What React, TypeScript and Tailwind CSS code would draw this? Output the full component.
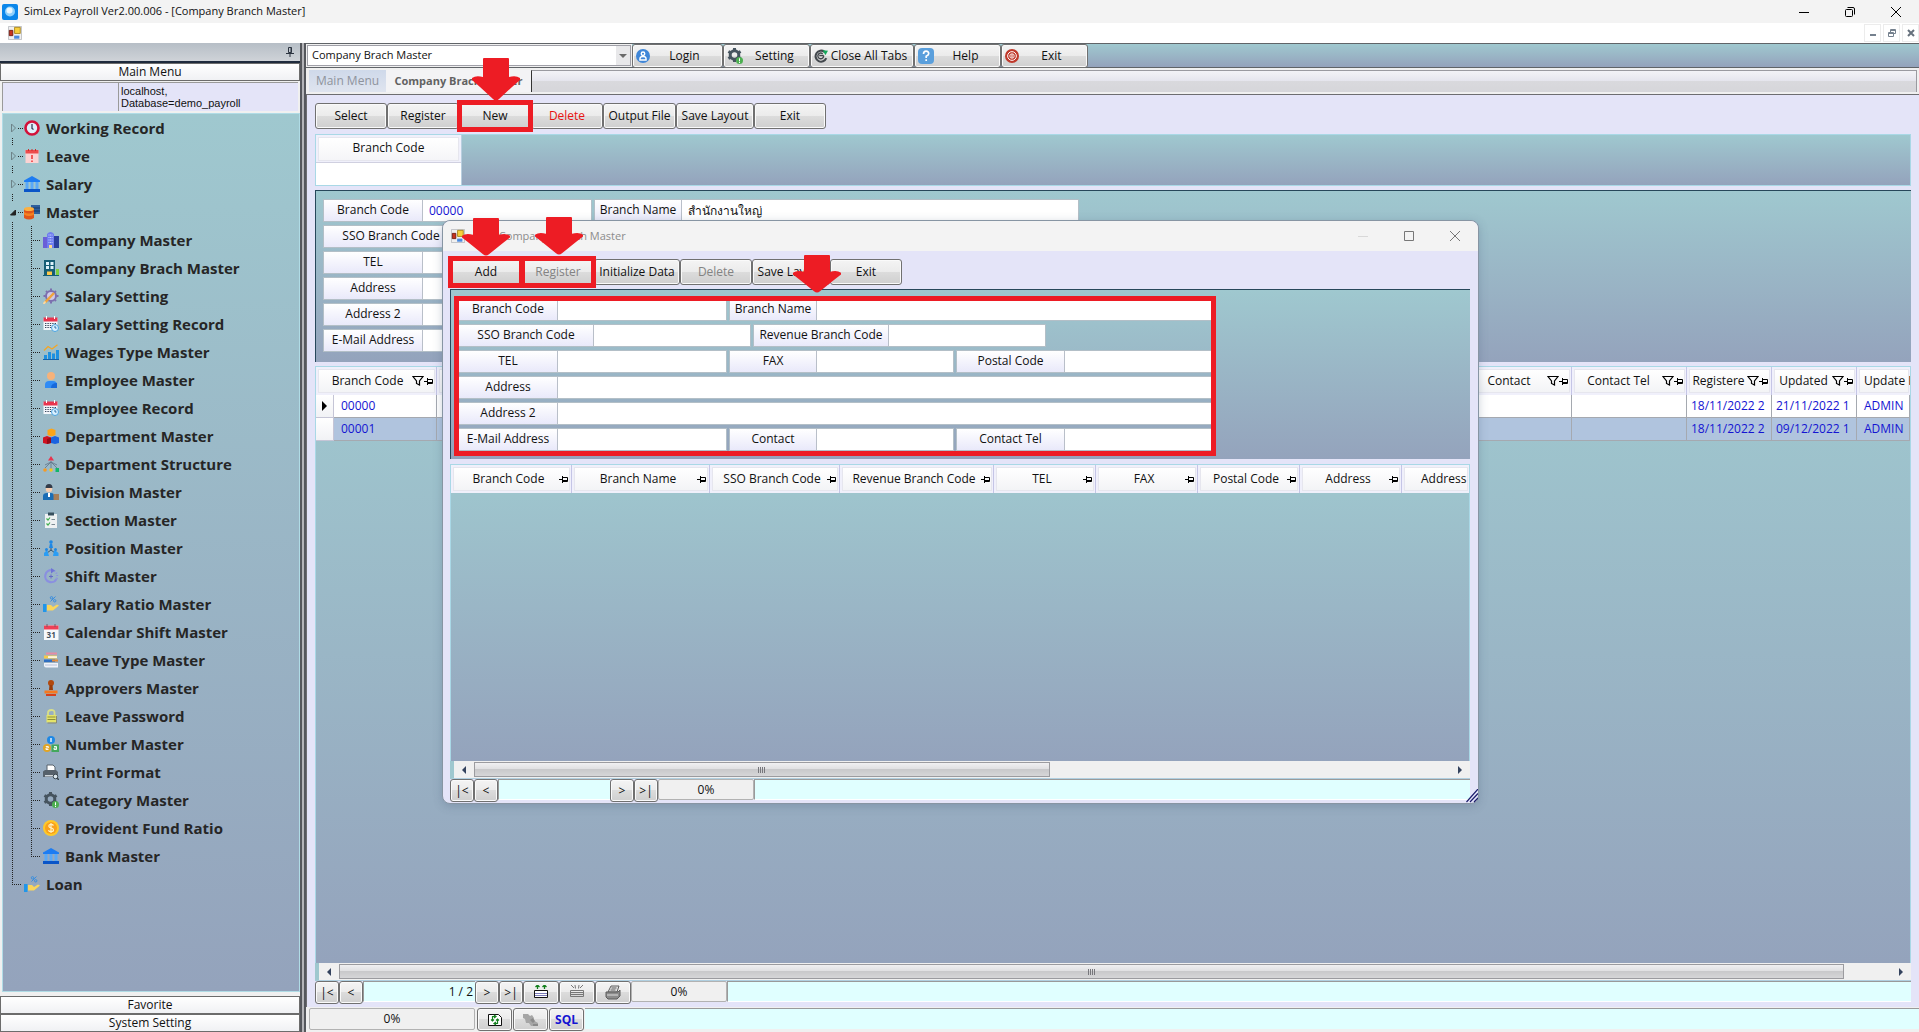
import React from 'react';
import { clsx } from 'clsx';

const BANK = (
  <>
    <path d="M8 0 L16 4.5 V6 H0 V4.5Z" fill="#1d7cf2" />
    <path d="M1.5 6h3v7h-3zM6.5 6h3v7h-3zM11.500 6h3v7h-3z" fill="#5aa9f8" />
    <path d="M0 13h16v3H0z" fill="#0a55c8" />
  </>
);

const CALENDAR_CLOCK = (
  <>
    <path d="M0.500 2h14v12h-14z" fill="#f4f6fb" />
    <path d="M0.500 1.500h14v4h-14z" fill="#e8344e" />
    <path d="M3.500 0v3M11.500 0v3" stroke="#fff" />
    <path d="M2 7.500h11M2 9.500h11M2 11.500h7" stroke="#3c4a60" strokeDasharray="1.400 1" />
    <circle cx="12" cy="12" r="3.500" fill="#d9f0ff" stroke="#4aa3df" />
    <path d="M12 10v2h1.500" stroke="#2a6fa8" fill="none" />
  </>
);

const HAND_PERCENT = (
  <>
    <path d="M0 8h3.500v8H0z" fill="#2196e8" />
    <path d="M4 9h4l2 2 4-2.500 2 1-6 5H4z" fill="#fbd65a" />
    <path d="M7.500 5.500 12.500 0.500" stroke="#3a8ede" />
    <circle cx="8.500" cy="1.800" r="1.200" fill="none" stroke="#3a8ede" />
    <circle cx="11.700" cy="4.800" r="1.200" fill="none" stroke="#3a8ede" />
  </>
);

const GEAR_INFO = (
  <>
    <circle cx="7.500" cy="7" r="4.300" fill="none" stroke="#46545f" strokeWidth="3" />
    <path d="M7.500 0v2M7.500 12v2M1.400 3.500l2 1.100M11.600 9.300l2 1.200M1.400 10.500l2-1.100M11.600 4.600l2-1.100" stroke="#46545f" strokeWidth="3" />
    <circle cx="12.500" cy="12.500" r="3.500" fill="#4caf50" />
    <path d="M12.500 10.300v3M12.500 14v1" stroke="#fff" />
  </>
);

const ICONS: Record<string, React.ReactNode> = {
  clock: (
    <>
      <circle cx="8" cy="8" r="6.500" fill="#dff0fb" stroke="#d3123a" strokeWidth="2.600" />
      <path d="M8 4v4.500l1.500 1" stroke="#2b3350" fill="none" strokeWidth="1.200" />
    </>
  ),
  leave: (
    <>
      <path d="M1.500 2h13v13h-13z" fill="#fbd3d3" />
      <path d="M1.500 2h13v3.500h-13z" fill="#ee4b4b" />
      <path d="M4.500 1v2M8 1v2M11.500 1v2" stroke="#c92d2d" />
      <path d="M8 7v4M8 12.500v1.500" stroke="#e33" strokeWidth="1.500" />
    </>
  ),
  bank: BANK,
  database: (
    <>
      <path d="M7 1h9v9H7z" fill="#2d5f9e" />
      <path d="M7 4h9M7 7h9" stroke="#173a68" />
      <path d="M0 5h10v9q-5 3-10 0z" fill="#e0561b" />
      <ellipse cx="5" cy="5" rx="5" ry="2" fill="#fbb040" />
      <path d="M0 8q5 3 10 0v2.500q-5 3-10 0z" fill="#f58220" />
    </>
  ),
  company: (
    <>
      <path d="M0 5h4v11H0z" fill="#6a5fd8" />
      <path d="M4 2q3.500-4 7 0v14H4z" fill="#6f7df0" />
      <path d="M11 4h5v12h-5z" fill="#2a3f9d" />
      <path d="M5.500 3h4M5.500 5.500h4M5.500 8h4M5.500 10.500h4" stroke="#c6d4ff" strokeDasharray="1 0.600" />
      <path d="M6 13h3v3H6z" fill="#ffd98a" />
    </>
  ),
  branch: (
    <>
      <path d="M1 0h11v16H1z" fill="#155e75" />
      <path d="M3 2h3v3H3zM7.500 2h3v3h-3zM3 6h3v3H3zM7.500 6h3v3h-3z" fill="#dff3fb" />
      <path d="M4 11.500h5V16H4z" fill="#ffc94a" />
      <path d="M0 15h16v1H0z" fill="#155e75" />
      <path d="M13 9h3v6h-3z" fill="#7ccf3e" />
    </>
  ),
  gearPencil: (
    <>
      <circle cx="8" cy="8" r="5" fill="#cfc9e8" stroke="#7c6fae" strokeWidth="2" />
      <path d="M8 0.500v2M8 13.500v2M0.500 8h2M13.500 8h2M3 3l1 1M12 12l1 1M12 4l1-1M3 13l1-1" stroke="#7c6fae" strokeWidth="2" />
      <path d="M2 14.500 11 5" stroke="#f0a33a" strokeWidth="2.500" />
      <path d="M0.500 16 2.500 13.500" stroke="#fbd9a0" strokeWidth="2" />
    </>
  ),
  calendarClock: CALENDAR_CLOCK,
  chart: (
    <>
      <path d="M1 11h3v4H1zM5 8h3v7H5zM9 9.500h3V15H9zM13 6h3v9h-3z" fill="#1e90e0" />
      <path d="M0 15.500h16" stroke="#1560a8" />
      <path d="M1 6.500 5 2.500 9 5 14.500 0.800" stroke="#f5a623" strokeWidth="1.300" fill="none" />
    </>
  ),
  person: (
    <>
      <circle cx="8" cy="4" r="4" fill="#f6b27a" />
      <path d="M2 16v-3q0-4 4-4h4q4 0 4 4v3z" fill="#2f8cf5" />
      <path d="M8 16q0-5 6-5v5z" fill="#1769db" />
    </>
  ),
  boxes: (
    <>
      <path d="M4.500 2 8.500 0.500 12.500 2v5l-4 1.500-4-1.500z" fill="#fba51a" />
      <path d="M0 9.500 4 8l4 1.500V15l-4 1-4-1z" fill="#cf1120" />
      <path d="M8 9.500 12 8l4 1.500V15l-4 1-4-1z" fill="#1b63e0" />
      <path d="M4 11v5l4-1V9.500z" fill="#960b18" />
    </>
  ),
  structure: (
    <>
      <path d="M8 5v8M8 6 2 12M8 6l6 6M2 9l6-3 6 3" stroke="#5f7488" fill="none" strokeWidth="0.800" />
      <path d="M8 0 11 4.500H5z" fill="#e8344e" />
      <circle cx="2" cy="14" r="1.800" fill="#f59a23" />
      <circle cx="8" cy="14" r="1.800" fill="#f3c623" />
      <path d="M12.500 12h3.500v4h-3.500z" fill="#12b76a" />
    </>
  ),
  division: (
    <>
      <circle cx="6" cy="5" r="3.200" fill="#f7cdb0" />
      <path d="M2.500 4q0-4 3.500-4t3.500 4z" fill="#333c4a" />
      <path d="M0 16v-4q0-3 4-3h4q3 0 3 3v4z" fill="#1a6db5" />
      <path d="M5 9h2v4H5z" fill="#fff" />
      <path d="M10.500 10H16v6h-5.500z" fill="#a77e58" />
    </>
  ),
  clipboard: (
    <>
      <path d="M2 2h12v14H2z" fill="#eef1f2" />
      <path d="M5 0.500h6v3H5z" fill="#38505e" />
      <path d="M3.500 6.500 5 8l2-2.500M3.500 11.500 5 13l2-2.500" stroke="#3fae4d" fill="none" strokeWidth="1.200" />
      <path d="M8.500 7.500H12M8.500 12.500H12" stroke="#7b8a92" />
    </>
  ),
  position: (
    <>
      <path d="M8 7v4M8 10 4 13M8 10l4 3" stroke="#33556d" fill="none" />
      <circle cx="8" cy="2" r="1.800" fill="#1e88e5" />
      <path d="M6 8 7 3.500h2L10 8z" fill="#1e88e5" />
      <circle cx="3.500" cy="9.500" r="1.500" fill="#1e88e5" />
      <path d="M1 16v-3l2-2h1.500L6 16z" fill="#2a9df4" />
      <circle cx="12.500" cy="9.500" r="1.500" fill="#1e88e5" />
      <path d="M10 16l1-5h2l2.500 2v3z" fill="#2a9df4" />
    </>
  ),
  shift: (
    <>
      <path d="M9 2.200A6 6 0 1 0 13.500 11" stroke="#8a8fe0" strokeWidth="2.200" fill="none" />
      <path d="M9 2.200A6 6 0 0 1 13.500 11" stroke="#8a8fe0" strokeWidth="2" strokeDasharray="1 1.500" fill="none" />
      <path d="M8 0l4 2.500L8 5.500z" fill="#6f74d6" />
      <path d="M8 6.500v4M6 8.500h4" stroke="#6468c8" />
    </>
  ),
  handPercent: HAND_PERCENT,
  calendar31: (
    <>
      <path d="M1 1.500h14.500V16H1z" fill="#f6f9fb" />
      <path d="M1 1.500h14.500v4H1z" fill="#ef4056" />
      <path d="M4 0v3M12 0v3" stroke="#7b5a64" />
      <text x="8.200" y="14" fontSize="8" textAnchor="middle" fill="#44525e" fontWeight="bold">31</text>
    </>
  ),
  books: (
    <>
      <path d="M3 0.500h11v2H3z" fill="#e88ba2" />
      <path d="M1 3.500h13v3H1z" fill="#f7c948" />
      <path d="M5 4.300h9v1.500H5z" fill="#fff" />
      <path d="M1 7.500h11v2.500H1z" fill="#2f6fc1" />
      <path d="M9 7.500h6v2H9z" fill="#e38b3a" />
      <path d="M1 11h14v4.500H3q-2 0-2-2z" fill="#f0f3fa" />
      <path d="M2 13h12" stroke="#b8c2d8" />
    </>
  ),
  stamp: (
    <>
      <circle cx="8" cy="3" r="3" fill="#b1490e" />
      <path d="M6.500 5h3l0.500 5H6z" fill="#9a3c08" />
      <path d="M1.500 10.500h13v3h-13z" fill="#f5791f" />
      <path d="M3 14h10v2H3z" fill="#d6401a" />
    </>
  ),
  lock: (
    <>
      <path d="M5 7V4.500q0-2.500 3.300-2.500t3.200 2.500V7" stroke="#d8df8a" strokeWidth="1.800" fill="none" />
      <path d="M3.500 7h10v7.500h-10z" fill="#e4e46a" />
      <path d="M4.500 9h8M4.500 11.500h8" stroke="#8c8f3c" />
      <path d="M13.500 8v7h-9" stroke="#8a8a70" fill="none" />
    </>
  ),
  numbers: (
    <>
      <circle cx="8" cy="4" r="4" fill="#1e88e5" />
      <circle cx="4" cy="12" r="4" fill="#e0a526" />
      <path d="M8.500 8.500H16V16H8.500z" fill="#43a85c" />
      <path d="M8 2v4" stroke="#fff" strokeWidth="1.300" />
      <path d="M2.800 10.500h2.500v1.500H3v1.500h2.500M11 10.500h2.500v3H11v-1.500h2.500" stroke="#fff" strokeWidth="0.900" fill="none" />
    </>
  ),
  printer: (
    <>
      <path d="M4 1h6l2 2v5H4z" fill="#fff" stroke="#59636c" />
      <path d="M0 7.500 2 6h11l2 2v5H0z" fill="#56616b" />
      <path d="M2 11h9v1.500H2z" fill="#cfd6db" />
      <circle cx="12.500" cy="12.500" r="2.300" fill="#dbe7ee" stroke="#39464f" />
      <path d="M14 14l2 2" stroke="#39464f" strokeWidth="1.500" />
    </>
  ),
  gearInfo: GEAR_INFO,
  coin: (
    <>
      <circle cx="8" cy="8" r="8" fill="#ffc928" />
      <circle cx="8" cy="8" r="6" fill="#f9a11b" />
      <path d="M10.500 5.500q-1-1.200-2.700-1.100-2 0.200-2 1.700 0 1.400 2.200 1.800 2.500 0.500 2.500 2 0 1.600-2.200 1.700-2 0-3-1.300M8 3v10" stroke="#fff3c4" strokeWidth="1.200" fill="none" />
    </>
  ),
  user: (
    <>
      <circle cx="8" cy="8" r="8" fill="#3f86d8" />
      <circle cx="8" cy="5.500" r="2" fill="none" stroke="#fff" strokeWidth="1.600" />
      <path d="M4.500 12.500V11q0-2.500 3.500-2.500t3.500 2.500v1.500z" fill="none" stroke="#fff" strokeWidth="1.600" />
    </>
  ),
  refresh: (
    <>
      <path d="M14 10.500A6.300 6.300 0 1 1 12 3.200" stroke="#43484d" strokeWidth="2.400" fill="none" />
      <path d="M6 7.500h5M11 7.500a3.300 3.300 0 1 1-1-2" stroke="#43484d" strokeWidth="1.600" fill="none" />
      <path d="M10 1.500l6 0.500-3 5z" fill="#14a85b" />
    </>
  ),
  help: (
    <>
      <rect width="16" height="16" rx="4" fill="#5a9fdc" />
      <path d="M5.500 6q0-2.800 2.600-2.800T10.700 5.700Q10.700 7 8.200 8.300V10M8.200 11.300V13" stroke="#fff" strokeWidth="1.700" fill="none" />
    </>
  ),
  power: (
    <>
      <circle cx="8" cy="8" r="8" fill="#c0392b" />
      <circle cx="8" cy="8" r="5" fill="none" stroke="#fff" strokeWidth="1.100" />
      <circle cx="8" cy="8" r="2.500" fill="none" stroke="#fff" strokeWidth="1" />
      <path d="M8 6v4" stroke="#fff" strokeWidth="1.200" />
    </>
  ),
  app: (
    <>
      <rect width="16" height="16" rx="2" fill="#0a86ea" />
      <circle cx="8" cy="7.500" r="5" fill="#8fd0fb" />
      <circle cx="7.500" cy="6.500" r="3" fill="#e6f6ff" />
    </>
  ),
  form: (
    <>
      <path d="M0.500 0.500h15v15h-15z" fill="#f0f0f0" stroke="#b9bcc0" />
      <path d="M1.500 5h4v6h-4z" fill="#c8321e" stroke="#6f1a10" />
      <path d="M7.500 1.500h6.500v7H7.500z" fill="#f8cf3c" stroke="#a88416" />
      <path d="M7 11h6v3.500H7z" fill="#4a8ae0" />
    </>
  ),
};

function Icon({ name, className = 'h-4 w-4' }: { name: string; className?: string }) {
  return (
    <svg viewBox="0 0 16 16" className={clsx('shrink-0', className)} aria-hidden="true">
      {ICONS[name]}
    </svg>
  );
}

const GRADIENT = 'bg-linear-to-b from-[#9fc8cf] to-[#94a3bc]';
const BUTTON =
  'shrink-0 rounded-[3px] border border-[#707070] bg-[linear-gradient(#f4f4f4,#ebebeb_50%,#dcdcdc_50%,#cfcfcf)] whitespace-nowrap shadow-[inset_0_0_0_1px_#fafafa]';

/* ---------- sidebar tree ---------- */

interface TreeItem {
  label: string;
  icon: string;
}

const ROOT_ITEMS: TreeItem[] = [
  { label: 'Working Record', icon: 'clock' },
  { label: 'Leave', icon: 'leave' },
  { label: 'Salary', icon: 'bank' },
];

const MASTER_ITEMS: TreeItem[] = [
  { label: 'Company Master', icon: 'company' },
  { label: 'Company Brach Master', icon: 'branch' },
  { label: 'Salary Setting', icon: 'gearPencil' },
  { label: 'Salary Setting Record', icon: 'calendarClock' },
  { label: 'Wages Type Master', icon: 'chart' },
  { label: 'Employee Master', icon: 'person' },
  { label: 'Employee Record', icon: 'calendarClock' },
  { label: 'Department Master', icon: 'boxes' },
  { label: 'Department Structure', icon: 'structure' },
  { label: 'Division Master', icon: 'division' },
  { label: 'Section Master', icon: 'clipboard' },
  { label: 'Position Master', icon: 'position' },
  { label: 'Shift Master', icon: 'shift' },
  { label: 'Salary Ratio Master', icon: 'handPercent' },
  { label: 'Calendar Shift Master', icon: 'calendar31' },
  { label: 'Leave Type Master', icon: 'books' },
  { label: 'Approvers Master', icon: 'stamp' },
  { label: 'Leave Password', icon: 'lock' },
  { label: 'Number Master', icon: 'numbers' },
  { label: 'Print Format', icon: 'printer' },
  { label: 'Category Master', icon: 'gearInfo' },
  { label: 'Provident Fund Ratio', icon: 'coin' },
  { label: 'Bank Master', icon: 'bank' },
];

function TreeRow({ item, lines, wide }: { item: TreeItem; lines: React.ReactNode; wide?: boolean }) {
  return (
    <li className="flex h-7 items-center">
      <svg className={clsx('h-7 shrink-0', wide ? 'w-10' : 'w-[21px]')} stroke="#222" fill="none" aria-hidden="true">
        {lines}
      </svg>
      <Icon name={item.icon} />
      <span className="ml-1.5 text-[15px] leading-6 font-bold whitespace-nowrap text-[#262626]">{item.label}</span>
    </li>
  );
}

function Tree() {
  return (
    <ul className={clsx('flex-1 border border-[#b0dce6]', GRADIENT)}>
      {ROOT_ITEMS.map((item, i) => (
        <TreeRow
          key={item.label}
          item={item}
          lines={
            <>
              {i > 0 && <path d="M9.500 0v4" strokeDasharray="1 1" />}
              <path d="M8.500 10v8l4-4z" stroke="#6d8388" />
              <path d="M15 14.500h5M9.500 24v4" strokeDasharray="1 1" />
            </>
          }
        />
      ))}
      <TreeRow
        item={{ label: 'Master', icon: 'database' }}
        lines={
          <>
            <path d="M9.500 0v4M15 14.500h5M9.500 24v4" strokeDasharray="1 1" />
            <path d="M12.500 12v5h-5z" fill="#222" />
          </>
        }
      />
      {MASTER_ITEMS.map((item, i) => (
        <TreeRow
          key={item.label}
          item={item}
          wide
          lines={
            <path
              d={i === MASTER_ITEMS.length - 1 ? 'M9.500 0v28M28.500 0v14M28 14.500h10' : 'M9.500 0v28M28.500 0v28M28 14.500h10'}
              strokeDasharray="1 1"
            />
          }
        />
      ))}
      <TreeRow item={{ label: 'Loan', icon: 'handPercent' }} lines={<path d="M9.500 0v14M9 14.500h10" strokeDasharray="1 1" />} />
    </ul>
  );
}

const BAR = 'h-[18px] w-full border border-[#6c6c6c] bg-linear-to-b from-white to-[#f0f1f4] text-center leading-4';

function Sidebar() {
  return (
    <aside className="flex w-[300px] shrink-0 flex-col bg-[#f0f0f0]">
      <div className="flex h-5 items-center justify-end border-b-2 border-[#1f2b3d] bg-linear-to-b from-[#b6bec6] to-[#cfd3d8] pr-1.5">
        <button aria-label="Pin">
          <svg className="h-2.5 w-2" viewBox="0 0 8 10" stroke="#2c3440" fill="none">
            <path d="M2.500 0.500h3v5h-3zM5 0.500v5M0 6.500h8M4 7v3" />
          </svg>
        </button>
      </div>
      <button className={BAR}>Main Menu</button>
      <div className="mx-0.5 mt-px flex h-[29px] bg-[#e4e4f8] text-[11px] leading-3">
        <div className="w-[116px] border-t border-l border-[#9a9a9a]" />
        <p className="flex-1 border-t border-l border-[#9a9a9a] pt-0.5 pl-0.5 font-['Liberation_Sans',Arial,sans-serif]">
          localhost,
          <br />
          Database=demo_payroll
        </p>
      </div>
      <div className="mt-0.5 mb-1 ml-0.5 flex flex-1">
        <Tree />
      </div>
      <button className={BAR}>Favorite</button>
      <button className={BAR}>System Setting</button>
    </aside>
  );
}

/* ---------- shared form / grid parts ---------- */

interface FieldDef {
  label: string;
  labelWidth: string;
  width: string;
  value?: string;
  valueColor?: string;
}

const buildFields = (code = '', name = ''): FieldDef[][] => [
  [
    { label: 'Branch Code', labelWidth: 'w-[99px]', width: 'w-[269px]', value: code, valueColor: 'text-[#1414d2]' },
    { label: 'Branch Name', labelWidth: 'w-[87px]', width: 'flex-1', value: name },
  ],
  [
    { label: 'SSO Branch Code', labelWidth: 'w-[135px]', width: 'w-[293px]' },
    { label: 'Revenue Branch Code', labelWidth: 'w-[135px]', width: 'w-[293px]' },
  ],
  [
    { label: 'TEL', labelWidth: 'w-[99px]', width: 'w-[269px]' },
    { label: 'FAX', labelWidth: 'w-[87px]', width: 'w-[225px]' },
    { label: 'Postal Code', labelWidth: 'w-[108px]', width: 'flex-1' },
  ],
  [{ label: 'Address', labelWidth: 'w-[99px]', width: 'flex-1' }],
  [{ label: 'Address 2', labelWidth: 'w-[99px]', width: 'flex-1' }],
  [
    { label: 'E-Mail Address', labelWidth: 'w-[99px]', width: 'w-[269px]' },
    { label: 'Contact', labelWidth: 'w-[87px]', width: 'w-[225px]' },
    { label: 'Contact Tel', labelWidth: 'w-[108px]', width: 'flex-1' },
  ],
];

function FieldGrid({ prefix, rows }: { prefix: string; rows: FieldDef[][] }) {
  return (
    <div className="flex w-[756px] flex-col gap-[3px]">
      {rows.map((row, i) => (
        <div key={i} className="flex h-[23px] gap-0.5">
          {row.map((f) => {
            const id = `${prefix}-${f.label.toLowerCase().replace(/\W+/g, '-')}`;
            return (
              <div key={f.label} className={clsx('flex min-w-0 border border-[#b3bfc7]', f.width)}>
                <label
                  htmlFor={id}
                  className={clsx('shrink-0 border-r border-[#b9bfc9] bg-linear-to-b from-white to-[#e9e9fa] text-center leading-5', f.labelWidth)}
                >
                  {f.label}
                </label>
                <input id={id} defaultValue={f.value} className={clsx('min-w-0 flex-1 bg-white px-1.5', f.valueColor)} />
              </div>
            );
          })}
        </div>
      ))}
    </div>
  );
}

function Pin() {
  return (
    <svg className="h-2.5 w-2.5 shrink-0" viewBox="0 0 10 10" stroke="#000" fill="none" aria-label="Fix column">
      <path d="M0 5.500h3M3.500 2v7M4 3.500h4.500v4H4M4 6.500h5" />
    </svg>
  );
}

function Funnel() {
  return (
    <svg className="h-2.5 w-3 shrink-0" viewBox="0 0 12 10" stroke="#000" fill="none" aria-label="Filter">
      <path d="M1 0.500h10L7.500 5v4l-3-1.500V5z" strokeWidth="1.200" />
    </svg>
  );
}

function HeaderCell({ label, filter, pin = true, align = 'pl-1 text-center' }: { label: string; filter?: boolean; pin?: boolean; align?: string }) {
  return (
    <div className="my-0.5 mr-px ml-0.5 flex h-6 items-center border border-[#e6e6ee] bg-linear-to-b from-white to-[#f3f4f6] font-normal">
      <span className={clsx('min-w-0 flex-1 whitespace-nowrap', align)}>{label}</span>
      {filter && <Funnel />}
      {pin && label && <Pin />}
    </div>
  );
}

function ScrollBar({ thumb }: { thumb: string }) {
  return (
    <div className="flex h-[18px] shrink-0 items-center border-b border-[#b0cfe0] border-l-4 border-l-[#9fc8cf] bg-[#f0f0f0]">
      <button aria-label="Scroll left" className="flex w-5 justify-center">
        <svg className="h-2 w-1" viewBox="0 0 4 8"><path d="M4 0v8L0 4z" fill="#34435e" /></svg>
      </button>
      <div className="flex h-[15px] flex-1">
        <div
          className={clsx(
            'flex items-center justify-center gap-px border border-[#9b9b9f] bg-[linear-gradient(#f0f0f2,#e0e0e2_45%,#c9c9cb_50%,#d6d6d8)]',
            thumb,
          )}
        >
          {[0, 1, 2, 3].map((n) => (
            <span key={n} className="h-1.5 w-px bg-[#77777c]" />
          ))}
        </div>
      </div>
      <button aria-label="Scroll right" className="flex w-5 justify-center">
        <svg className="h-2 w-1" viewBox="0 0 4 8"><path d="M0 0v8l4-4z" fill="#34435e" /></svg>
      </button>
    </div>
  );
}

function Progress({ className }: { className: string }) {
  return (
    <div className={clsx('shrink-0 rounded-[2px] border border-[#b2b2b2] bg-[#f0f0f0] text-center leading-5', className)}>
      0%
    </div>
  );
}

function Navigator({ position = '', children }: { position?: string; children?: React.ReactNode }) {
  const btn = clsx(BUTTON, 'h-[23px] w-6');
  return (
    <div className="flex h-6 shrink-0 items-start">
      <button className={btn} aria-label="First">|&lt;</button>
      <button className={btn} aria-label="Previous">&lt;</button>
      <input
        aria-label="Record position"
        defaultValue={position}
        className="h-[21px] w-28 shrink-0 border-t border-b border-l border-[#9a9a9a] border-b-white bg-[#e0ffff] px-0.5 text-right"
      />
      <button className={btn} aria-label="Next">&gt;</button>
      <button className={btn} aria-label="Last">&gt;|</button>
      {children}
      <Progress className="h-[21px] w-24" />
      <div className="h-[21px] flex-1 border-t border-b border-l border-[#9a9a9a] border-b-white bg-[#e0ffff]" />
    </div>
  );
}

/* red guide marks drawn over the controls */

function Arrow({ className }: { className: string }) {
  return (
    <svg viewBox="0 0 48 43" preserveAspectRatio="none" className={clsx('pointer-events-none absolute z-20', className)} aria-hidden="true">
      <path d="M11 1q0-1 1-1h24q1 0 1 1v18q7-2 11 1v2l-8 7-13 12q-3 3-6 0L8 29 0 22v-2q4-3 11-1z" fill="#ed1c24" />
    </svg>
  );
}

function Callout({ arrow, children }: { arrow: string; children: React.ReactNode }) {
  return (
    <div className="relative flex">
      {children}
      <div className="pointer-events-none absolute -inset-x-0.5 -inset-y-[3px] z-10 border-[5px] border-[#ed1c24]" />
      <Arrow className={arrow} />
    </div>
  );
}

/* ---------- main area ---------- */

function TopBar() {
  const btn = clsx(BUTTON, 'flex h-6 items-center rounded-[2px] px-[3px]');
  return (
    <div className={clsx('flex h-[25px] items-center border-y border-[#606468]', GRADIENT)}>
      <div className="flex h-full items-center bg-[#f0f0f0] px-px">
        <div className="relative">
          <select
            aria-label="Open form"
            className="h-[21px] w-[324px] appearance-none border border-[#a0a0a8] bg-white pl-1 text-[11px]"
          >
            <option>Company Brach Master</option>
          </select>
          <span className="pointer-events-none absolute inset-y-px right-px flex w-3.5 items-center justify-center bg-[#e8e8ea]">
            <svg className="h-1 w-2" viewBox="0 0 8 4"><path d="M0 0h8L4 4z" fill="#6a6a6a" /></svg>
          </span>
        </div>
      </div>
      <button className={clsx(btn, 'w-[91px]')}><Icon name="user" className="h-3.5 w-3.5" /><span className="flex-1">Login</span></button>
      <button className={clsx(btn, 'w-[87px]')}><Icon name="gearInfo" /><span className="flex-1">Setting</span></button>
      <button className={clsx(btn, 'w-[104px]')}><Icon name="refresh" className="h-3.5 w-3.5" /><span className="flex-1">Close All Tabs</span></button>
      <button className={clsx(btn, 'w-[87px]')}><Icon name="help" /><span className="flex-1">Help</span></button>
      <button className={clsx(btn, 'w-[87px]')}><Icon name="power" className="h-3.5 w-3.5" /><span className="flex-1">Exit</span></button>
    </div>
  );
}

function Tabs() {
  return (
    <div className="flex h-[27px] border-b border-[#6d6d70] bg-[#f0f0f0] pt-0.5 pb-0.5 pl-[3px]">
      <button className="w-[77px] bg-linear-to-b from-[#cfd9ea] to-[#dfe4ef] text-[#8e939c]">Main Menu</button>
      <button className="w-[145px] bg-[#f3f3f5] text-[11px] font-bold whitespace-nowrap text-[#626262]">Company Brach Master</button>
      <div className="mr-0.5 flex-1 border-t border-r border-l border-[#9a9aa0] border-l-[#333] bg-[linear-gradient(#f3f3f7,#e6e6ee_45%,#d9d9dd_50%,#d6d6da)]" />
    </div>
  );
}

const GRID_COLUMNS = [
  { label: 'Contact', width: 'w-[104px]' },
  { label: 'Contact Tel', width: 'w-[115px]' },
  { label: 'Registere', width: 'w-[85px]' },
  { label: 'Updated', width: 'w-[85px]' },
];

const GRID_ROWS = [
  { code: '00000', registered: '18/11/2022 2', updated: '21/11/2022 1', by: 'ADMIN' },
  { code: '00001', registered: '18/11/2022 2', updated: '09/12/2022 1', by: 'ADMIN' },
];

function BranchGrid() {
  const cell = 'overflow-hidden border-r border-b border-[#a5a9b0] px-[7px] whitespace-nowrap';
  return (
    <div className={clsx('flex-1 overflow-hidden border border-b-0 border-[#a9d8e6]', GRADIENT)}>
      <table className="w-full table-fixed border-separate border-spacing-0 text-left">
        <colgroup>
          <col className="w-[18px]" />
          <col className="w-[103px]" />
          <col />
          {GRID_COLUMNS.map((c) => <col key={c.label} className={c.width} />)}
          <col className="w-[53px]" />
        </colgroup>
        <thead>
          <tr className="h-7 bg-[#f0f0fb]">
            <th colSpan={2} className="border-r border-[#c5c5e6] p-0"><HeaderCell label="Branch Code" filter /></th>
            <th className="border-r border-[#c5c5e6] p-0"><HeaderCell label="" /></th>
            {GRID_COLUMNS.map((c) => (
              <th key={c.label} className="border-r border-[#c5c5e6] p-0"><HeaderCell label={c.label} filter align="text-center" /></th>
            ))}
            <th className="p-0"><HeaderCell label="Update P" pin={false} align="pl-1" /></th>
          </tr>
        </thead>
        <tbody className="text-[#1414d2]">
          {GRID_ROWS.map((row, i) => (
            <tr key={row.code} className={clsx('h-[23px]', i === 1 ? 'bg-[#b0c4de]' : 'bg-white')}>
              <td className="border-r border-b border-[#c5c5d6] bg-linear-to-b from-white to-[#f1f2f5] p-0">
                {i === 0 && (
                  <svg className="mx-auto h-2.5 w-[5px]" viewBox="0 0 5 10" aria-label="Current row"><path d="M0 0v10l5-5z" fill="#000" /></svg>
                )}
              </td>
              <td className={cell}>{row.code}</td>
              <td className={cell} />
              <td className={cell} />
              <td className={cell} />
              <td className={clsx(cell, 'pr-0 pl-1')}>{row.registered}</td>
              <td className={clsx(cell, 'pr-0 pl-1')}>{row.updated}</td>
              <td className={cell}>{row.by}</td>
            </tr>
          ))}
        </tbody>
      </table>
    </div>
  );
}

function BranchForm() {
  const btn = clsx(BUTTON, 'h-[26px]');
  return (
    <section className="flex flex-1 flex-col border-l border-[#6d6d70] bg-[#e4e4f8] px-2 pt-2 pb-0.5">
      <div className="flex">
        <button className={clsx(btn, 'w-[72px]')}>Select</button>
        <button className={clsx(btn, 'w-[72px]')}>Register</button>
        <Callout arrow="-top-[45px] left-[13px] h-[43px] w-12">
          <button className={clsx(btn, 'w-[72px]')}>New</button>
        </Callout>
        <button className={clsx(btn, 'w-[72px] text-[#e81212]')}>Delete</button>
        <button className={clsx(btn, 'w-[73px]')}>Output File</button>
        <button className={clsx(btn, 'w-[78px]')}>Save Layout</button>
        <button className={clsx(btn, 'w-[72px]')}>Exit</button>
      </div>

      <div className={clsx('mt-[5px] h-[52px] border border-[#a9d8e6]', GRADIENT)}>
        <div className="w-[146px] border-r border-[#b9cfe0] bg-[#f0f0fb]">
          <label htmlFor="filter-code" className="block h-[27px] p-0.5">
            <span className="block h-6 border border-[#e6e6ee] bg-linear-to-b from-white to-[#f5f5f8] text-center leading-5">Branch Code</span>
          </label>
          <input id="filter-code" className="block h-[23px] w-full border-t border-[#d0d0e0] bg-white px-1.5" />
        </div>
      </div>

      <div className={clsx('mt-1 h-[172px] border-t border-l border-[#27475a] pt-2 pl-[7px]', GRADIENT)}>
        <FieldGrid prefix="detail" rows={buildFields('00000', 'สำนักงานใหญ่')} />
      </div>

      <div className="mt-1 flex flex-1 flex-col">
        <BranchGrid />
        <ScrollBar thumb="w-[97%]" />
        <Navigator position="1 / 2">
          <button className={clsx(BUTTON, 'flex h-[23px] w-9 items-center justify-center')} aria-label="Append row">
            <svg className="h-4 w-4" viewBox="0 0 16 16" fill="none">
              <path d="M4.500 0v4M11.500 0v4M2.500 2l2-2 2 2M9.500 2l2-2 2 2" stroke="#14801e" strokeWidth="1.300" />
              <path d="M1.500 5.500h13v7h-13z" fill="#fff" stroke="#111" />
              <path d="M2 8.500h12M2 10.500h12" stroke="#7a7ab8" />
            </svg>
          </button>
          <button className={clsx(BUTTON, 'flex h-[23px] w-9 items-center justify-center')} aria-label="Insert row">
            <svg className="h-4 w-4" viewBox="0 0 16 16" fill="none" stroke="#777">
              <path d="M2 0l3 3M6 0l0.500 3.500M10 0l-0.500 3.500M14 0l-3 3M1.500 5.500h13v6h-13zM2 7.500h12M2 9.500h12" />
            </svg>
          </button>
          <button className={clsx(BUTTON, 'flex h-[23px] w-9 items-center justify-center')} aria-label="Print">
            <svg className="h-4 w-4" viewBox="0 0 16 16" stroke="#5c5c5c">
              <path d="M6 1h8l-2 6H3z" fill="#e2e2e2" />
              <path d="M6.500 3h5M5.500 5h5" />
              <path d="M1 7h12l2-2v6l-3 3H3l-2-2z" fill="#8b8b8b" />
              <path d="M2 10h11" stroke="#ddd" />
            </svg>
          </button>
        </Navigator>
      </div>
    </section>
  );
}

function StatusBar() {
  const btn = clsx(BUTTON, 'flex h-[23px] w-[35px] items-center justify-center');
  return (
    <footer className="flex h-[25px] items-start gap-px bg-[#f0f0f0] pt-px pl-[3px]">
      <Progress className="mr-px h-[22px] w-[166px]" />
      <button className={btn} aria-label="Reload">
        <svg className="h-3.5 w-3.5" viewBox="0 0 14 14" fill="none">
          <path d="M0.500 1.500h10l3 3v8h-13z" fill="#fff" stroke="#111" />
          <path d="M7 3.500H4.500v4M7 10.500h2.500v-4M6 2l2 1.500L6 5M8 9l-2 1.500L8 12M3 6.500l1.500 1.500L6 6.500M8 7.500 9.500 6 11 7.500" stroke="#14801e" strokeWidth="1.200" />
        </svg>
      </button>
      <button className={btn} aria-label="Run" disabled>
        <svg className="h-3.5 w-4" viewBox="0 0 16 14">
          <path d="M0 1h5l2 2 2-1 2 3-1 2 5 3v3H8l-2-3-3 0-1-4-2-1z" fill="#a6a6a6" />
          <path d="M7 7l3-2 2 3-2 2zM10 11h5v2h-5z" fill="#8a8a8a" />
        </svg>
      </button>
      <button className={clsx(btn, 'font-bold text-[#1414d2]')}>SQL</button>
      <div className="h-[21px] flex-1 border-t border-[#9a9a9a] bg-[#e0ffff]" />
    </footer>
  );
}

/* ---------- dialog ---------- */

const DIALOG_COLUMNS = [
  { label: 'Branch Code', width: 'w-[121px]' },
  { label: 'Branch Name', width: 'w-[138px]' },
  { label: 'SSO Branch Code', width: 'w-[130px]' },
  { label: 'Revenue Branch Code', width: 'w-[154px]' },
  { label: 'TEL', width: 'w-[102px]' },
  { label: 'FAX', width: 'w-[102px]' },
  { label: 'Postal Code', width: 'w-[102px]' },
  { label: 'Address', width: 'w-[102px]' },
];

function NewBranchDialog() {
  const btn = clsx(BUTTON, 'h-[26px]');
  return (
    <div
      role="dialog"
      aria-label="New Company Branch Master"
      className="absolute top-[220px] left-[442px] flex h-[584px] w-[1037px] flex-col rounded-lg border border-[#8795a3] bg-[#e4e4f8] shadow-[0_2px_10px_rgba(60,80,110,0.25)]"
    >
      <div className="flex h-[30px] shrink-0 items-center rounded-t-lg bg-[#f3f3f3] pl-2 text-[11px] text-[#8c8c8c]">
        <Icon name="form" className="h-3.5 w-3.5" />
        <span className="ml-2 flex-1">New Company Branch Master</span>
        <button aria-label="Minimize" className="flex w-[46px] justify-center">
          <svg className="h-2.5 w-2.5" viewBox="0 0 10 10"><path d="M0 5.500h10" stroke="#d8d8d8" /></svg>
        </button>
        <button aria-label="Maximize" className="flex w-[46px] justify-center">
          <svg className="h-2.5 w-2.5" viewBox="0 0 10 10"><path d="M0.500 0.500h9v9h-9z" stroke="#777" fill="none" /></svg>
        </button>
        <button aria-label="Close" className="flex w-[46px] justify-center">
          <svg className="h-2.5 w-2.5" viewBox="0 0 10 10"><path d="M0 0l10 10M10 0 0 10" stroke="#777" /></svg>
        </button>
      </div>

      <div className="flex flex-1 flex-col pt-2 pr-2 pl-[7px]">
        <div className="flex">
          <Callout arrow="-top-[41px] left-3 h-[38px] w-12">
            <button className={clsx(btn, 'w-[72px]')}>Add</button>
          </Callout>
          <Callout arrow="-top-[42px] left-[13px] h-[38px] w-12">
            <button className={clsx(btn, 'w-[72px] text-[#838383]')} disabled>Register</button>
          </Callout>
          <button className={clsx(btn, 'w-[86px]')}>Initialize Data</button>
          <button className={clsx(btn, 'w-[72px] text-[#838383]')} disabled>Delete</button>
          <button className={clsx(btn, 'w-[78px]')}>Save Layout</button>
          <button className={clsx(btn, 'w-[72px]')}>Exit</button>
        </div>

        <div className={clsx('mt-1 h-[170px] border-t border-l border-[#27475a] pt-2 pl-[7px]', GRADIENT)}>
          <div className="relative w-[756px]">
            <FieldGrid prefix="new" rows={buildFields()} />
            <div className="pointer-events-none absolute -top-0.5 -right-0.5 -bottom-[5px] -left-1 border-[5px] border-[#ed1c24]" />
            <Arrow className="-top-[43px] left-[335px] h-[38px] w-12" />
          </div>
        </div>

        <div className={clsx('mt-[5px] flex-1 overflow-hidden border border-b-0 border-[#a9d8e6]', GRADIENT)}>
          <table className="w-full table-fixed border-separate border-spacing-0">
            <colgroup>
              {DIALOG_COLUMNS.map((c) => <col key={c.label} className={c.width} />)}
              <col />
            </colgroup>
            <thead>
              <tr className="h-7 bg-[#f0f0fb]">
                {DIALOG_COLUMNS.map((c) => (
                  <th key={c.label} className="border-r border-[#c5c5e6] p-0"><HeaderCell label={c.label} /></th>
                ))}
                <th className="p-0"><HeaderCell label="Address 2" pin={false} align="pl-4 text-left" /></th>
              </tr>
            </thead>
          </table>
        </div>
        <ScrollBar thumb="w-[59%]" />
        <Navigator />
      </div>
      <svg className="absolute right-0 bottom-0 h-3.5 w-3" viewBox="0 0 12 14" stroke="#1c1c6c" strokeWidth="1.200" aria-hidden="true">
        <path d="M0.500 13 12 0M4 13l8-8.500M8 13l4-4" />
      </svg>
    </div>
  );
}

/* ---------- window ---------- */

function TitleBar() {
  return (
    <header>
      <div className="flex h-[23px] items-center bg-[#f3f3f3] pl-0.5">
        <Icon name="app" />
        <h1 className="ml-1.5 flex-1 text-[11px]">SimLex Payroll Ver2.00.006 - [Company Branch Master]</h1>
        <button aria-label="Minimize" className="flex w-[46px] justify-center">
          <svg className="h-2.5 w-2.5" viewBox="0 0 10 10"><path d="M0 5.500h10" stroke="#000" /></svg>
        </button>
        <button aria-label="Restore" className="flex w-[46px] justify-center">
          <svg className="h-2.5 w-2.5" viewBox="0 0 10 10" fill="none" stroke="#000">
            <rect x="0.500" y="2.500" width="7" height="7" rx="1" />
            <path d="M2.500 0.500H8q1.500 0 1.500 1.500v5.500" />
          </svg>
        </button>
        <button aria-label="Close" className="flex w-[46px] justify-center">
          <svg className="h-2.5 w-2.5" viewBox="0 0 10 10"><path d="M0 0l10 10M10 0 0 10" stroke="#000" /></svg>
        </button>
      </div>
      <div className="flex h-5 items-center gap-0.5 bg-white pl-2">
        <Icon name="form" className="h-3.5 w-3.5" />
        <div className="flex-1" />
        <button aria-label="Minimize form" className="flex h-[18px] w-[17px] items-center justify-center border border-[#ececec]">
          <svg className="h-2 w-2" viewBox="0 0 8 8"><path d="M1 6h6" stroke="#75818e" strokeWidth="2" /></svg>
        </button>
        <button aria-label="Restore form" className="flex h-[18px] w-[17px] items-center justify-center border border-[#ececec]">
          <svg className="h-2 w-2" viewBox="0 0 8 8" fill="none" stroke="#75818e"><path d="M0.500 3.500h5v4h-5zM0 4.500h6M2.500 3V0.500h5v4H6M2 1.500h6" /></svg>
        </button>
        <button aria-label="Close form" className="flex h-[18px] w-[17px] items-center justify-center border border-[#ececec]">
          <svg className="h-2 w-2" viewBox="0 0 8 8"><path d="M1 1l6 6M7 1 1 7" stroke="#66717d" strokeWidth="2" /></svg>
        </button>
      </div>
    </header>
  );
}

export default function App() {
  return (
    <div className="relative flex min-h-screen flex-col overflow-hidden bg-[#f0f0f0] font-['Open_Sans','Noto_Sans',sans-serif] text-xs text-[#111]">
      <TitleBar />
      <div className="flex flex-1">
        <Sidebar />
        <div className="w-1.5 shrink-0 border-x-2 border-[#55575c] bg-[#b4b4b8]" />
        <main className="flex min-w-0 flex-1 flex-col">
          <TopBar />
          <Tabs />
          <BranchForm />
          <StatusBar />
        </main>
      </div>
      <NewBranchDialog />
    </div>
  );
}
